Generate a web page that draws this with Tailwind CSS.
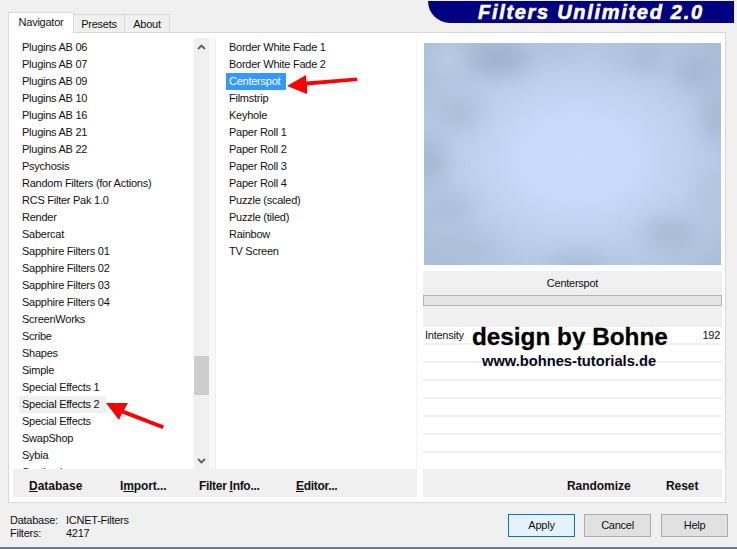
<!DOCTYPE html>
<html lang="en">
<head>
    <meta charset="UTF-8">
    <meta name="viewport" content="width=device-width, initial-scale=1.0">
    <title>Filters Unlimited 2.0</title>
    <script src="https://cdn.jsdelivr.net/npm/@tailwindcss/browser@4"></script>
</head>
<body class="relative w-[737px] h-[549px] overflow-hidden bg-[#f0f0f0] font-['Liberation_Sans',sans-serif] text-[11px] tracking-[-0.25px] text-[#111]">
    <!-- Tabs and banner -->
    <div class="flex h-[32px] pl-[8px]">
        <div class="flex items-end">
            <div class="relative z-10 w-[66px] h-[21px] -mb-px bg-white border border-b-0 border-[#d9d9d9] text-center leading-[18px]">Navigator</div>
            <div class="w-[51px] h-[18px] bg-[#f0f0f0] border border-l-0 border-b-0 border-[#d9d9d9] text-center leading-[19px]">Presets</div>
            <div class="w-[45px] h-[18px] bg-[#f0f0f0] border border-l-0 border-b-0 border-[#d9d9d9] text-center leading-[19px]">About</div>
        </div>
        <div class="ml-[258px] mt-px flex h-[22px] w-[306px] items-center rounded-bl-[28px] bg-[#000080] pl-[50px] text-[20px] font-bold italic tracking-[1.7px] text-white [-webkit-text-stroke:0.6px_white]">Filters Unlimited 2.0</div>
    </div>

    <!-- Main panel -->
    <div class="ml-[8px] flex h-[471px] w-[718px] gap-[6px] border border-[#d9d9d9] bg-white pl-[4px] pt-[5px]">
        <!-- Lists -->
        <div class="flex w-[404px] flex-col">
            <div class="flex h-[431px]">
                <div class="w-[181px] overflow-hidden pl-[9px] pt-px leading-[17px]">
                    <div>Plugins AB 06</div>
                    <div>Plugins AB 07</div>
                    <div>Plugins AB 09</div>
                    <div>Plugins AB 10</div>
                    <div>Plugins AB 16</div>
                    <div>Plugins AB 21</div>
                    <div>Plugins AB 22</div>
                    <div>Psychosis</div>
                    <div>Random Filters (for Actions)</div>
                    <div>RCS Filter Pak 1.0</div>
                    <div>Render</div>
                    <div>Sabercat</div>
                    <div>Sapphire Filters 01</div>
                    <div>Sapphire Filters 02</div>
                    <div>Sapphire Filters 03</div>
                    <div>Sapphire Filters 04</div>
                    <div>ScreenWorks</div>
                    <div>Scribe</div>
                    <div>Shapes</div>
                    <div>Simple</div>
                    <div>Special Effects 1</div>
                    <div class="-ml-[3px] w-[87px] bg-[#f0f0f0] pl-[3px]">Special Effects 2</div>
                    <div>Special Effects</div>
                    <div>SwapShop</div>
                    <div>Sybia</div>
                    <div>Synthesis</div>
                </div>
                <!-- Scrollbar -->
                <div class="flex w-[15px] flex-col bg-[#f0f0f0]">
                    <div class="flex h-[17px] items-center justify-center">
                        <svg width="9" height="6" viewBox="0 0 9 6"><path d="M1 5 L4.5 1.5 L8 5" fill="none" stroke="#606060" stroke-width="1.8"/></svg>
                    </div>
                    <div class="mt-[301px] h-[39px] bg-[#cdcdcd]"></div>
                    <div class="mt-auto flex h-[17px] items-center justify-center">
                        <svg width="9" height="6" viewBox="0 0 9 6"><path d="M1 1 L4.5 4.5 L8 1" fill="none" stroke="#606060" stroke-width="1.8"/></svg>
                    </div>
                </div>
                <div class="w-[7px] border-r border-[#f0f0f0] bg-[#f8f8f8]"></div>
                <div class="flex-1 border-r border-[#f5f5f5] pl-[13px] pt-px leading-[17px]">
                    <div>Border White Fade 1</div>
                    <div>Border White Fade 2</div>
                    <div class="-ml-[3px] w-[60px] bg-[#3399ff] pl-[3px] text-white">Centerspot</div>
                    <div>Filmstrip</div>
                    <div>Keyhole</div>
                    <div>Paper Roll 1</div>
                    <div>Paper Roll 2</div>
                    <div>Paper Roll 3</div>
                    <div>Paper Roll 4</div>
                    <div>Puzzle (scaled)</div>
                    <div>Puzzle (tiled)</div>
                    <div>Rainbow</div>
                    <div>TV Screen</div>
                </div>
            </div>
            <div class="flex h-[28px] items-center bg-[#f0f0f0] pl-[16px] pt-[6px] text-[12px] font-bold tracking-normal">
                <span class="w-[91px]"><u>D</u>atabase</span>
                <span class="w-[79px] tracking-[-0.1px]">I<u>m</u>port...</span>
                <span class="w-[97px] tracking-[-0.3px]">Filter <u>I</u>nfo...</span>
                <span class="tracking-[-0.3px]"><u>E</u>ditor...</span>
            </div>
        </div>

        <!-- Preview and settings -->
        <div class="flex w-[299px] flex-col">
            <svg class="ml-px mt-[5px] block" width="297" height="222" viewBox="0 0 297 222">
                <defs>
                    <radialGradient id="glow" cx="0.52" cy="0.52" r="0.68">
                        <stop offset="0" stop-color="#c9dcfc"/>
                        <stop offset="0.3" stop-color="#c6d9f8"/>
                        <stop offset="0.65" stop-color="#b9cce9"/>
                        <stop offset="1" stop-color="#aabdd9"/>
                    </radialGradient>
                    <filter id="soft" x="-50%" y="-50%" width="200%" height="200%"><feGaussianBlur stdDeviation="12"/></filter>
                    <clipPath id="frame"><rect width="297" height="222"/></clipPath>
                </defs>
                <rect width="297" height="222" fill="url(#glow)"/>
                <g clip-path="url(#frame)">
                    <g filter="url(#soft)">
                        <ellipse cx="75" cy="16" rx="32" ry="11" fill="#93a7c4"/>
                        <ellipse cx="190" cy="14" rx="14" ry="8" fill="#a8bcd8"/>
                        <ellipse cx="222" cy="16" rx="13" ry="10" fill="#9aaecb"/>
                        <ellipse cx="272" cy="30" rx="20" ry="10" fill="#98accb"/>
                        <ellipse cx="22" cy="14" rx="18" ry="9" fill="#c6d9f4"/>
                        <ellipse cx="135" cy="8" rx="28" ry="6" fill="#a8bcd8"/>
                        <ellipse cx="35" cy="70" rx="20" ry="14" fill="#a6bad6"/>
                        <ellipse cx="4" cy="118" rx="14" ry="20" fill="#9cb0cc"/>
                        <ellipse cx="26" cy="165" rx="24" ry="10" fill="#a4b8d4"/>
                        <ellipse cx="45" cy="205" rx="34" ry="10" fill="#a8bcd8"/>
                        <ellipse cx="155" cy="222" rx="32" ry="7" fill="#9cb0cc"/>
                        <ellipse cx="245" cy="190" rx="26" ry="10" fill="#9cb0cc"/>
                        <ellipse cx="292" cy="75" rx="10" ry="26" fill="#9cb0cc"/>
                        <ellipse cx="288" cy="150" rx="10" ry="26" fill="#adc1dd"/>
                    </g>
                </g>
            </svg>
            <div class="mt-[6px] h-[56px] bg-[#f0f0f0]">
                <div class="h-[24px] text-center leading-[24px]">Centerspot</div>
                <div class="h-[11px] border border-[#b4b4b4] bg-[#e4e4e4]"></div>
            </div>
            <div class="flex h-[16px] justify-between px-[2px] leading-[16px]">
                <span>Intensity</span><span>192</span>
            </div>
            <div class="h-[126px]">
                <div class="h-[18px] border-t-2 border-[#f0f0f0]"></div>
                <div class="h-[18px] border-t-2 border-[#f0f0f0]"></div>
                <div class="h-[18px] border-t-2 border-[#f0f0f0]"></div>
                <div class="h-[18px] border-t-2 border-[#f0f0f0]"></div>
                <div class="h-[18px] border-t-2 border-[#f0f0f0]"></div>
                <div class="h-[18px] border-t-2 border-[#f0f0f0]"></div>
                <div class="h-[18px] border-t-2 border-[#f0f0f0]"></div>
            </div>
            <div class="flex h-[28px] items-center bg-[#f0f0f0] pt-[6px] text-[12px] font-bold tracking-[-0.05px]">
                <span class="ml-[144px] w-[99px]">Randomize</span>
                <span>Reset</span>
            </div>
        </div>
    </div>

    <!-- Status and dialog buttons -->
    <div class="flex h-[44px] w-[728px] items-start pl-[10px]">
        <div class="mt-[11px] grid grid-cols-[56px_auto] leading-[13px]">
            <span>Database:</span><span>ICNET-Filters</span>
            <span>Filters:</span><span>4217</span>
        </div>
        <button class="ml-auto mt-[11px] h-[23px] w-[67px] border border-[#0078d7] bg-[#e5f1fb]">Apply</button>
        <button class="ml-[9px] mt-[11px] h-[23px] w-[67px] border border-[#adadad] bg-[#e1e1e1]">Cancel</button>
        <button class="ml-[10px] mt-[11px] h-[23px] w-[67px] border border-[#adadad] bg-[#e1e1e1]">Help</button>
    </div>
    <div class="absolute bottom-0 left-0 h-[2px] w-full bg-[#6f7f8e]"></div>

    <!-- Watermark over the settings -->
    <div class="absolute left-[472px] top-[323px] whitespace-nowrap text-[24.3px] font-bold leading-[28px] tracking-normal text-black [-webkit-text-stroke:0.3px_black]">design by Bohne</div>
    <div class="absolute left-[482px] top-[352px] whitespace-nowrap text-[14.7px] font-bold leading-[18px] tracking-normal text-[#050520]">www.bohnes-tutorials.de</div>

    <!-- Red arrows -->
    <svg class="pointer-events-none absolute left-0 top-0" width="737" height="549" viewBox="0 0 737 549">
        <path d="M287 86 L306 75 L306.5 81.5 L357 77.5 L357.5 81 L307 85.5 L307 94 Z" fill="#ff0000"/>
        <path d="M106 403 L128 403 L124 410 L164 425.5 L162.5 429 L122 413.5 L119 420 Z" fill="#ff0000"/>
    </svg>
</body>
</html>
